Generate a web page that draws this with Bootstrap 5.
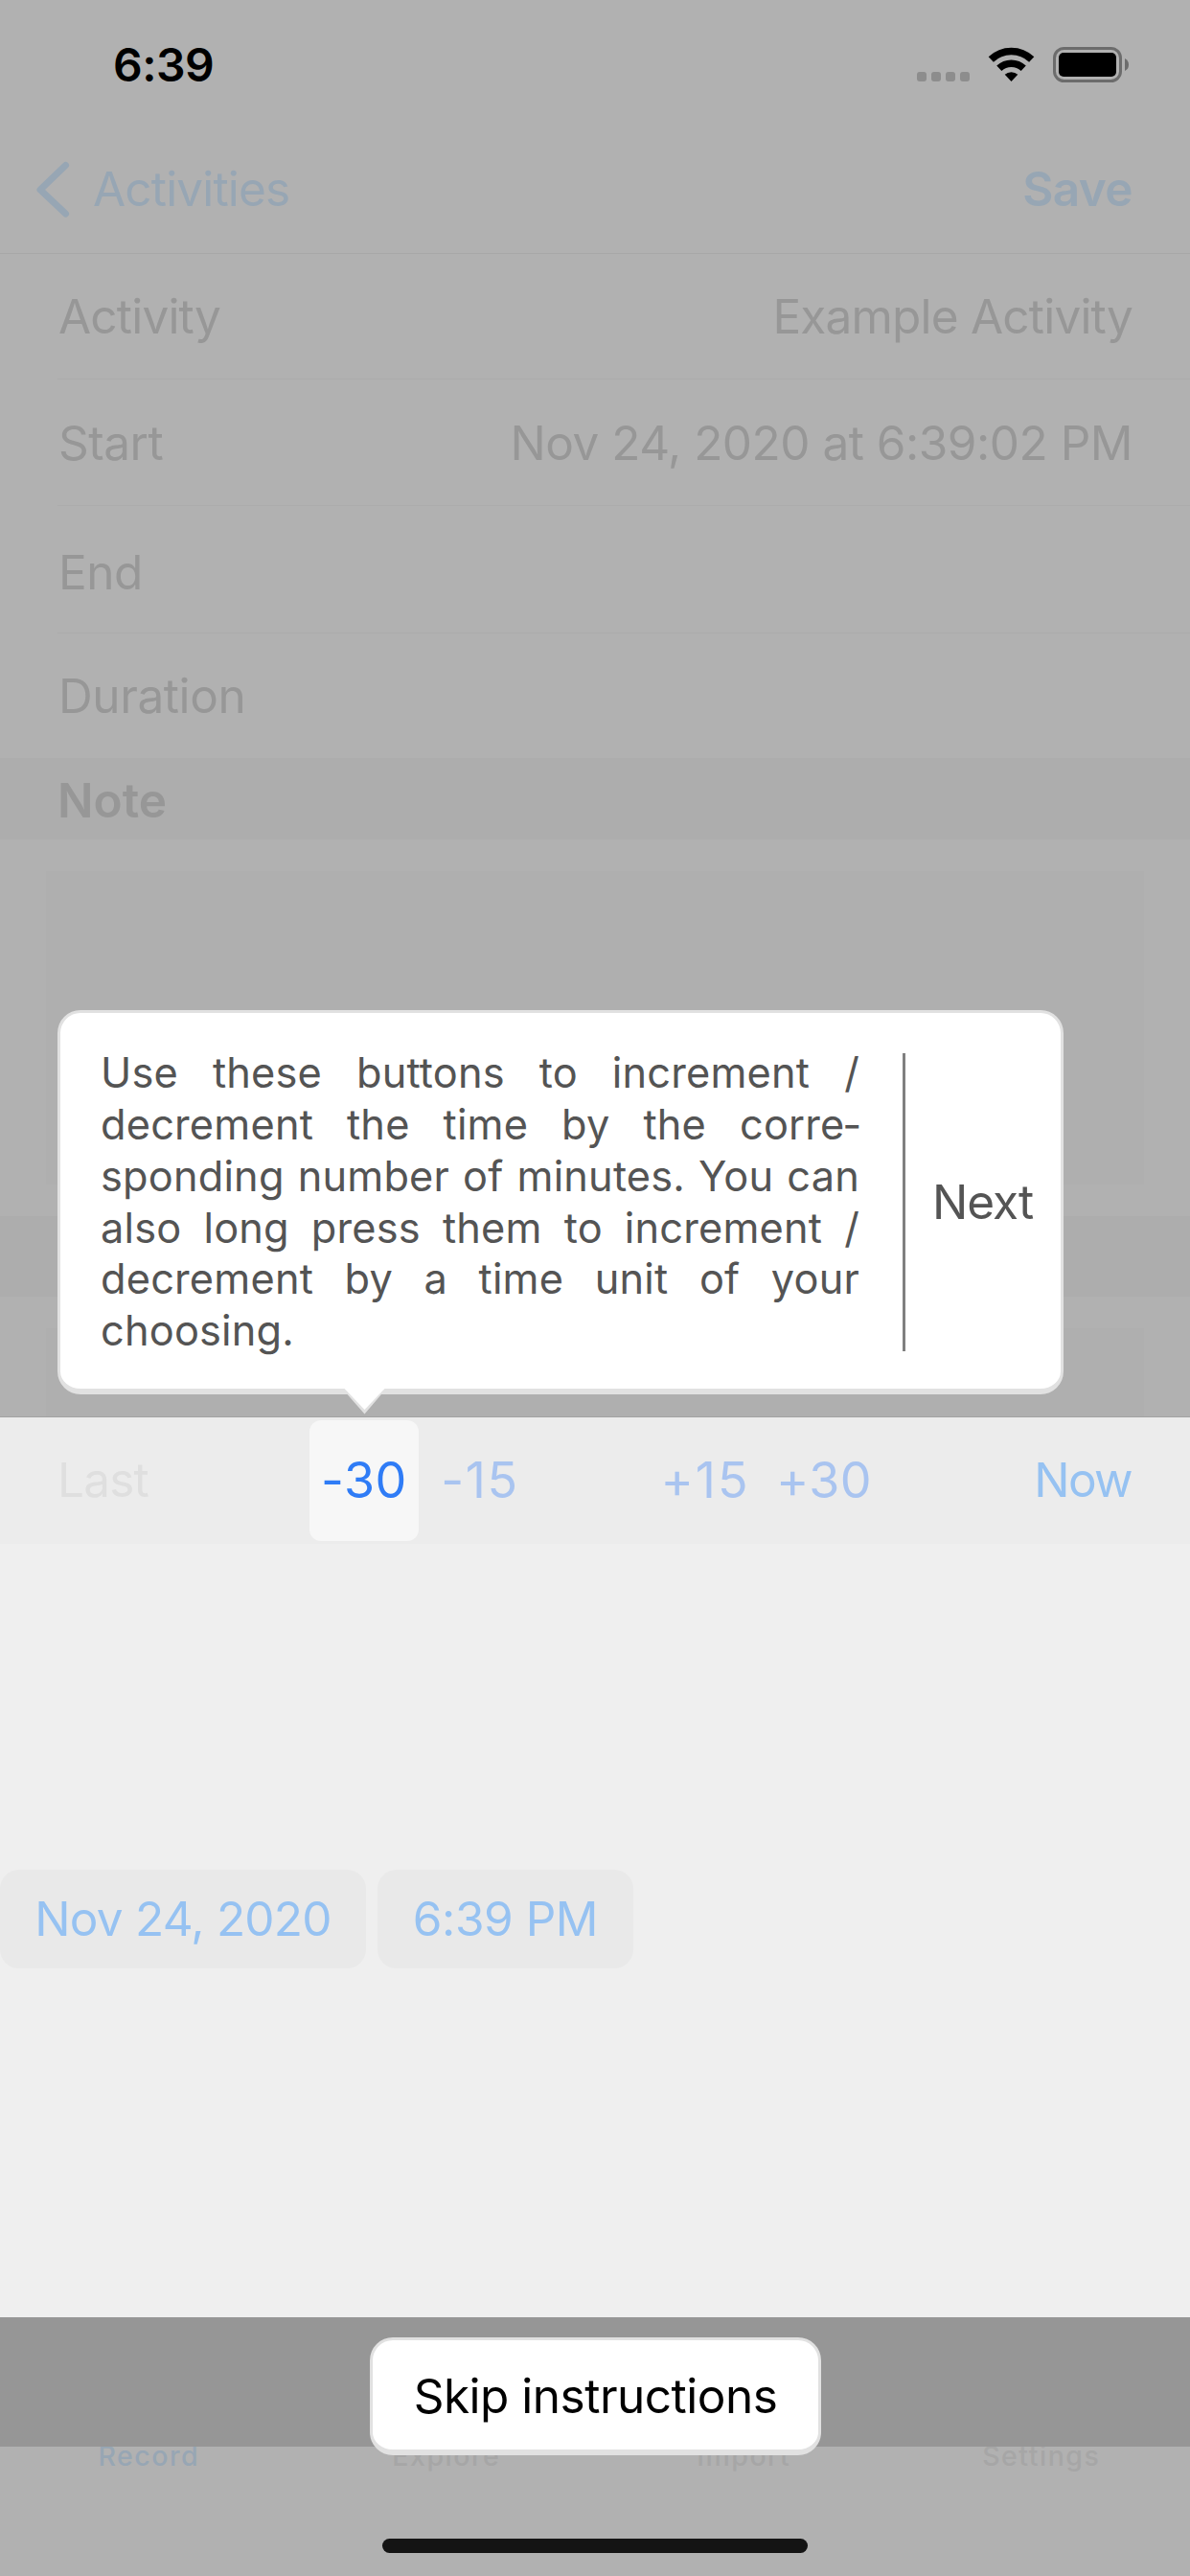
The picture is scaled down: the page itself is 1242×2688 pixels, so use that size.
<!DOCTYPE html>
<html lang="en">
<head>
<meta charset="utf-8">
<meta name="viewport" content="width=device-width, initial-scale=1">
<title>Activities</title>
<link href="https://cdn.jsdelivr.net/npm/bootstrap@5.3.0/dist/css/bootstrap.min.css" rel="stylesheet">
<style>
body{margin:0;background:#b1b1b1;font-family:Inter,"Liberation Sans",sans-serif;font-size:49.5px;line-height:1.2;color:#979797}
.screen{width:1242px;height:2688px;overflow:hidden;white-space:nowrap}
.status-bar{height:132px;padding:0 64px 0 118px}
.clock{font-size:48px;font-weight:600;color:#000;margin-top:39px;letter-spacing:-.5px}
.status-icons{margin-top:45px}
.nav-top{height:133px;padding:0 60px 0 34px;border-bottom:1px solid #a8a8a8;color:#97a6b4}
.nav-back{letter-spacing:-.83px}
.nav-back svg{margin-right:22px}
.nav-save{letter-spacing:-.6px}
.form-row{height:130px;margin-left:58px;padding:2px 60px 0 3px;letter-spacing:-.8px}
.form-row.row-start{height:131px;letter-spacing:-.5px}
.form-row.row-end{height:132px;padding-top:8px;letter-spacing:-.5px}
.form-row.row-duration{letter-spacing:-.4px}
.row-line{margin-left:60px;height:1px;background:#acacac}
.section-head{background:#adadad;padding:5px 0 0 60px;height:85px;font-weight:600}
.section-head.untitled{height:84px}
.note-area{background:#afafaf;margin:33px 48px;height:327px}
.note-area.cut{height:92px;margin-bottom:0}
.sheet{background:#efefef;height:940px;border-top:1px solid #a2a2a2}
.action-bar{height:132px;background:#ececec;padding:0 61px 0 60px}
.last-label{width:263px;color:#dfdfdf;letter-spacing:-.8px}
.step{color:#a9c4f0;font-size:52px;width:114px;height:126px;border-radius:12px;letter-spacing:.5px}
.step.active{background:#f7f7f7;color:#2f7cf6}
.step-m15{margin-left:7px;letter-spacing:1.6px}
.step-p15{margin-left:121px;letter-spacing:1.9px}
.step-p30{margin-left:10px}
.pale{color:#96c2f2}
.now-label{letter-spacing:-1.6px}
.pickers{margin-top:340px;gap:12px}
.pill{background:#e9e9e9;border-radius:20px;height:103px}
.pill-date{width:382px;letter-spacing:-.75px}
.pill-time{width:267px;letter-spacing:-.46px}
.dark-strip{height:135px;background:#969696;position:relative;z-index:1}
.tab-bar{margin-top:-7px;font-size:28.5px;font-weight:500;color:#a6a6a6;letter-spacing:1.5px}
.tab-on{color:#97a6b4}
.home-bar{left:399px;top:2649px;width:444px;height:15px;border-radius:8px;background:#141414}
.bubble{background:#fff;border:3px solid #e1e1e1;border-bottom-width:6px;border-radius:24px;z-index:2}
.tip{left:60px;top:1054px;width:1050px;height:401px;color:#545454;padding:3px 0 0 42px}
.tip-text{width:792px;font-size:43.3px;line-height:53.8px;text-align:justify;white-space:normal;letter-spacing:.2px}
.tip-rule{width:3px;height:311px;background:#808080;margin:0 28px 0 45px}
.tip-next{letter-spacing:-1px}
.tip-arrow{left:296px;top:392px}
.skip{left:386px;top:2439px;width:471px;height:123px;color:#000;padding-top:4px;letter-spacing:-.5px}
</style>
</head>
<body>
<div class="screen position-relative d-flex flex-column">
  <header class="status-bar d-flex justify-content-between align-items-start">
    <span class="clock">6:39</span>
    <svg class="status-icons" width="225" height="44" viewBox="953 45 225 44">
      <g fill="#8d8d8d"><rect x="957" y="75" width="10" height="10" rx="3"/><rect x="972" y="75" width="10" height="10" rx="3"/><rect x="987" y="75" width="10" height="10" rx="3"/><rect x="1002" y="75" width="10" height="10" rx="3"/></g>
      <path d="M1055.500 85L1048.700 77.800A10 10 0 0 1 1062.300 77.800Z"/>
      <g fill="none" stroke="#000" stroke-width="7.500"><path d="M1042.800 71.300A18.500 18.500 0 0 1 1068.200 71.300"/><path d="M1034.300 62A30.500 30.500 0 0 1 1076.700 62"/></g>
      <rect x="1100.500" y="50.500" width="69" height="34" rx="10" fill="none" stroke="#6c6c6c" stroke-width="3"/>
      <rect x="1105" y="55" width="60" height="25" rx="5"/>
      <path d="M1174 61Q1178 63 1178 67.500Q1178 72 1174 74Z" fill="#6c6c6c"/>
    </svg>
  </header>
  <nav class="nav-top d-flex align-items-center justify-content-between">
    <span class="nav-back d-flex align-items-center"><svg width="41" height="62" viewBox="34 167 41 62"><path d="M68.500 172.500L42 198L68.500 223" fill="none" stroke="#97a6b4" stroke-width="7" stroke-linecap="round" stroke-linejoin="round"/></svg>Activities</span>
    <span class="nav-save fw-semibold">Save</span>
  </nav>
  <main>
    <div class="form-row d-flex justify-content-between align-items-center"><span>Activity</span><span>Example Activity</span></div>
    <div class="row-line"></div>
    <div class="form-row row-start d-flex justify-content-between align-items-center"><span>Start</span><span>Nov 24, 2020 at 6:39:02 PM</span></div>
    <div class="row-line"></div>
    <div class="form-row row-end d-flex align-items-center"><span>End</span></div>
    <div class="row-line"></div>
    <div class="form-row row-duration d-flex align-items-center"><span>Duration</span></div>
    <div class="section-head d-flex align-items-center">Note</div>
    <div class="note-area"></div>
    <div class="section-head untitled"></div>
    <div class="note-area cut"></div>
  </main>
  <section class="sheet">
    <div class="action-bar d-flex align-items-center">
      <span class="last-label">Last</span>
      <span class="step active d-flex align-items-center justify-content-center">-30</span>
      <span class="step step-m15 d-flex align-items-center justify-content-center">-15</span>
      <span class="step step-p15 d-flex align-items-center justify-content-center">+15</span>
      <span class="step step-p30 d-flex align-items-center justify-content-center">+30</span>
      <span class="now-label pale ms-auto">Now</span>
    </div>
    <div class="pickers d-flex pale">
      <span class="pill pill-date d-flex align-items-center justify-content-center">Nov 24, 2020</span>
      <span class="pill pill-time d-flex align-items-center justify-content-center">6:39 PM</span>
    </div>
  </section>
  <div class="dark-strip"></div>
  <footer class="tab-bar d-flex text-center">
    <span class="w-25 tab-on">Record</span><span class="w-25">Explore</span><span class="w-25">Import</span><span class="w-25">Settings</span>
  </footer>

  <div class="tip bubble position-absolute d-flex align-items-center">
    <div class="tip-text">Use these buttons to increment / decrement the time by the corre&shy;sponding number of minutes. You can also long press them to increment / decrement by a time unit of your choosing.</div>
    <div class="tip-rule"></div>
    <span class="tip-next">Next</span>
    <svg class="tip-arrow position-absolute" width="44" height="28" viewBox="0 0 44 28"><path d="M3.500 6L21.500 26.500L39 6V0H3.500Z" fill="#e1e1e1"/><path d="M.5 0H42.500L21.500 22Z" fill="#fff"/></svg>
  </div>
  <div class="skip bubble position-absolute d-flex align-items-center justify-content-center">Skip instructions</div>
  <div class="home-bar position-absolute"></div>
</div>
<script src="https://cdn.jsdelivr.net/npm/bootstrap@5.3.0/dist/js/bootstrap.bundle.min.js"></script>
</body>
</html>
